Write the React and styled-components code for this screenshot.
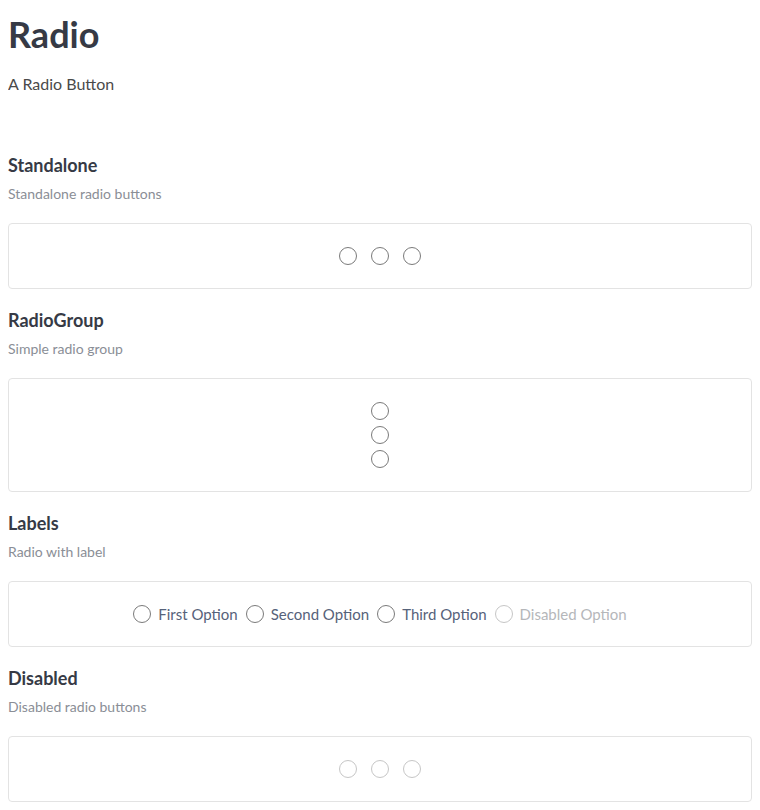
import React from 'react';
import styled, { createGlobalStyle } from 'styled-components';

const GlobalStyle = createGlobalStyle`
  body {
    margin: 8px;
    background: #ffffff;
    font-family: Lato, "Open Sans", sans-serif;
  }
`;

const Page = styled.div`
  display: flex;
  flex-direction: column;
`;

const Title = styled.h1`
  margin: 0;
  font-size: 36px;
  line-height: 52px;
  font-weight: 700;
  color: #363a45;
`;

const Subtitle = styled.p`
  margin: 14px 0 0;
  font-size: 16px;
  line-height: 20px;
  color: #4a4a4a;
`;

const Section = styled.section`
  display: flex;
  flex-direction: column;
  margin-top: ${(p) => (p.first ? '59px' : '19px')};
`;

const Heading = styled.h2`
  margin: 0;
  font-size: 18px;
  line-height: 24px;
  font-weight: 700;
  color: #363a45;
`;

const Desc = styled.p`
  margin: 7px 0 0;
  font-size: 14px;
  line-height: 20px;
  color: #8a8e96;
`;

const Box = styled.div`
  margin-top: 19px;
  padding: 23px;
  border: 1px solid #e3e3e3;
  border-radius: 4px;
  display: flex;
  flex-direction: ${(p) => (p.column ? 'column' : 'row')};
  justify-content: center;
  align-items: center;
  gap: ${(p) => p.gap || '14px'};
`;

const Circle = styled.span`
  box-sizing: border-box;
  display: inline-block;
  width: 18px;
  height: 18px;
  border-radius: 50%;
  border: 1px solid ${(p) => (p.disabled ? '#c6c6c6' : '#7a7a7a')};
  background: #fff;
  flex-shrink: 0;
`;

const Label = styled.label`
  display: inline-flex;
  align-items: center;
  gap: 7px;
  font-size: 15px;
  line-height: 18px;
  color: ${(p) => (p.disabled ? '#b5b7ba' : '#56627a')};
`;

const Radio = ({ disabled, children }) =>
  children ? (
    <Label disabled={disabled}>
      <Circle disabled={disabled} />
      {children}
    </Label>
  ) : (
    <Circle disabled={disabled} />
  );

export default function App() {
  return (
    <Page>
      <GlobalStyle />
      <Title>Radio</Title>
      <Subtitle>A Radio Button</Subtitle>

      <Section first>
        <Heading>Standalone</Heading>
        <Desc>Standalone radio buttons</Desc>
        <Box>
          <Radio />
          <Radio />
          <Radio />
        </Box>
      </Section>

      <Section>
        <Heading>RadioGroup</Heading>
        <Desc>Simple radio group</Desc>
        <Box column gap="6px">
          <Radio />
          <Radio />
          <Radio />
        </Box>
      </Section>

      <Section>
        <Heading>Labels</Heading>
        <Desc>Radio with label</Desc>
        <Box gap="8px">
          <Radio>First Option</Radio>
          <Radio>Second Option</Radio>
          <Radio>Third Option</Radio>
          <Radio disabled>Disabled Option</Radio>
        </Box>
      </Section>

      <Section>
        <Heading>Disabled</Heading>
        <Desc>Disabled radio buttons</Desc>
        <Box>
          <Radio disabled />
          <Radio disabled />
          <Radio disabled />
        </Box>
      </Section>
    </Page>
  );
}
